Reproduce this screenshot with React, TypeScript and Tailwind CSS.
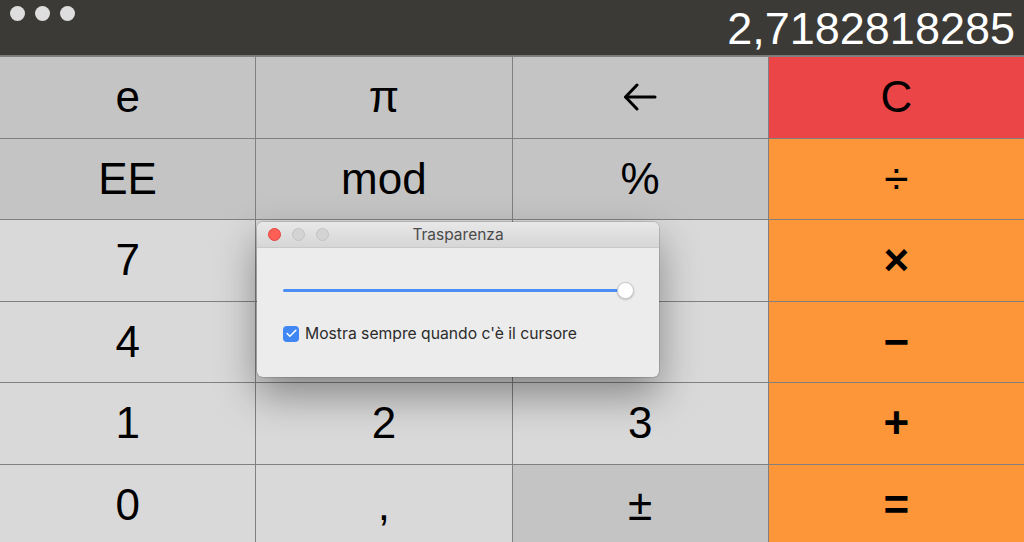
import { Check } from "lucide-react";

type Key = { label: string; tone: "dark" | "light" | "red" | "orange"; bold?: boolean };

const keys: Key[] = [
  { label: "e", tone: "dark" },
  { label: "π", tone: "dark" },
  { label: "back", tone: "dark" },
  { label: "C", tone: "red" },
  { label: "EE", tone: "dark" },
  { label: "mod", tone: "dark" },
  { label: "%", tone: "dark" },
  { label: "÷", tone: "orange" },
  { label: "7", tone: "light" },
  { label: "8", tone: "light" },
  { label: "9", tone: "light" },
  { label: "×", tone: "orange", bold: true },
  { label: "4", tone: "light" },
  { label: "5", tone: "light" },
  { label: "6", tone: "light" },
  { label: "−", tone: "orange", bold: true },
  { label: "1", tone: "light" },
  { label: "2", tone: "light" },
  { label: "3", tone: "light" },
  { label: "+", tone: "orange", bold: true },
  { label: "0", tone: "light" },
  { label: ",", tone: "light" },
  { label: "±", tone: "dark" },
  { label: "=", tone: "orange", bold: true },
];

const toneClass = {
  dark: "bg-[#c4c4c4]",
  light: "bg-[#d9d9d9]",
  red: "bg-[#eb4548]",
  orange: "bg-[#fd9539]",
};

function BackArrow() {
  return (
    <svg width="34" height="28" viewBox="0 0 34 28" fill="none" stroke="black" strokeWidth="3" strokeLinecap="round" strokeLinejoin="round">
      <path d="M32 14H3" />
      <path d="M14 2L2.5 14L14 26" />
    </svg>
  );
}

function Trasparenza() {
  return (
    <div className="absolute left-[257px] top-[222px] w-[402px] h-[155px] rounded-[6px] bg-[#ececec] shadow-[0_18px_40px_rgba(0,0,0,0.38),0_0_0_1px_rgba(0,0,0,0.12)] overflow-hidden font-['Inter',sans-serif]">
      <div className="relative h-[26px] flex items-center border-b border-[#c9c9c9] bg-gradient-to-b from-[#e8e8e8] to-[#d6d6d6]">
        <div className="flex items-center gap-[11px] pl-[11px]">
          <span className="w-[13px] h-[13px] rounded-full bg-[#fd5f57] border border-[#e0443e]" />
          <span className="w-[13px] h-[13px] rounded-full bg-[#d3d3d3] border border-[#c2c2c2]" />
          <span className="w-[13px] h-[13px] rounded-full bg-[#d3d3d3] border border-[#c2c2c2]" />
        </div>
        <div className="absolute inset-0 flex items-center justify-center text-[15.5px] text-[#4b4b4b]">
          Trasparenza
        </div>
      </div>
      <div className="px-[26px] pt-[34px]">
        <div className="relative h-[17px] flex items-center">
          <div className="h-[3px] w-[337px] rounded-full bg-[#4a8ef6]" />
          <div className="absolute left-[334px] w-[17px] h-[17px] rounded-full bg-white border border-[#c6c6c6] shadow-[0_1px_2px_rgba(0,0,0,0.2)]" />
        </div>
        <div className="mt-[23px] flex items-center gap-[6px]">
          <span className="w-[16px] h-[16px] rounded-[4px] bg-[#3f87f5] flex items-center justify-center">
            <Check className="w-[13px] h-[13px] text-white" strokeWidth={3} />
          </span>
          <span className="text-[15.7px] text-[#2b2b2b]">Mostra sempre quando c'è il cursore</span>
        </div>
      </div>
    </div>
  );
}

export default function App() {
  return (
    <div className="relative w-[1024px] h-[542px] overflow-hidden bg-[#808080] font-['Liberation_Sans',Arial,sans-serif]">
      <div className="h-[56px] bg-[#3b3a36] flex items-start justify-between border-b border-[#7a7a7a]">
        <div className="flex gap-[10px] pl-[10px] pt-[6px]">
          <span className="w-[15px] h-[15px] rounded-full bg-[#dedede]" />
          <span className="w-[15px] h-[15px] rounded-full bg-[#dedede]" />
          <span className="w-[15px] h-[15px] rounded-full bg-[#dedede]" />
        </div>
        <div className="pr-[9px] text-white text-[45px] leading-[56px] mt-[1px]">2,7182818285</div>
      </div>
      <div className="grid grid-cols-4 grid-rows-[repeat(6,80.5px)] gap-px pt-px">
        {keys.map((k) => (
          <div
            key={k.label}
            className={`${toneClass[k.tone]} ${k.bold ? "font-bold" : ""} flex items-center justify-center text-black text-[44px]`}
          >
            {k.label === "back" ? <BackArrow /> : k.label}
          </div>
        ))}
      </div>
      <Trasparenza />
    </div>
  );
}
